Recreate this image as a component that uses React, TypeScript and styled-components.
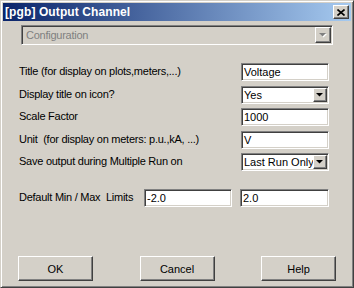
import React from 'react';
import styled, { createGlobalStyle } from 'styled-components';

const GlobalStyle = createGlobalStyle`
  html, body { margin: 0; padding: 0; background: #d4d0c8; }
  body { font-family: "Liberation Sans", Arial, sans-serif; }
`;

// classic win2k palette
const FACE = '#d4d0c8';
const SHADOW = '#808080';
const DARK = '#404040';

const Window = styled.div`
  box-sizing: border-box;
  width: 354px;
  height: 288px;
  display: flex;
  flex-direction: column;
  background: ${FACE};
  border: 1px solid;
  border-color: ${FACE} ${DARK} ${DARK} ${FACE};
  box-shadow: inset 1px 1px #fff, inset -1px -1px ${SHADOW};
  padding: 2px;
`;

const TitleBar = styled.div`
  height: 18px;
  flex: none;
  display: flex;
  align-items: center;
  justify-content: space-between;
  padding: 0 2px 0 2px;
  background: linear-gradient(90deg, #0a246a 0%, #a6caf0 100%);
`;

const TitleText = styled.span`
  color: #fff;
  font-weight: bold;
  font-size: 12px;
  letter-spacing: 0.1px;
`;

const Raised = styled.div`
  box-sizing: border-box;
  background: ${FACE};
  border: 1px solid;
  border-color: #fff ${DARK} ${DARK} #fff;
  box-shadow: inset -1px -1px ${SHADOW};
  display: flex;
  align-items: center;
  justify-content: center;
`;

const CloseButton = styled(Raised)`
  width: 16px;
  height: 14px;
`;

const Body = styled.div`
  flex: 1;
  display: flex;
  flex-direction: column;
  padding: 0 15px 4px 15px;
`;

const Sunken = styled.div<{ $w: number; $h?: number; $disabled?: boolean }>`
  box-sizing: border-box;
  flex: none;
  width: ${(p) => p.$w}px;
  height: ${(p) => p.$h ?? 18}px;
  display: flex;
  align-items: center;
  background: ${(p) => (p.$disabled ? FACE : '#fff')};
  color: ${(p) => (p.$disabled ? SHADOW : '#000')};
  border: 1px solid;
  border-color: ${SHADOW} #fff #fff ${SHADOW};
  box-shadow: inset 1px 1px ${DARK}, inset -1px -1px ${FACE};
  padding: 1px;
  font-size: 11px;
  letter-spacing: ${(p) => (p.$disabled ? '-0.25px' : '0')};
  overflow: hidden;
`;

const FieldText = styled.span<{ $pad?: number }>`
  flex: 1;
  white-space: nowrap;
  overflow: hidden;
  padding-left: ${(p) => p.$pad ?? 1}px;
`;

const ArrowButton = styled(Raised)<{ $size: number }>`
  flex: none;
  width: ${(p) => p.$size}px;
  height: ${(p) => p.$size}px;
`;

const ConfigCombo = styled(Sunken)`
  margin: 4px 3px 0 3px;
  width: auto;
`;

const Row = styled.div<{ $top: number }>`
  display: flex;
  align-items: center;
  margin-top: ${(p) => p.$top}px;
  margin-right: 7px;
  gap: 8px;
`;

const Label = styled.div`
  flex: 1;
  padding-left: 1px;
  font-size: 11px;
  letter-spacing: -0.25px;
  white-space: pre;
  color: #000;
  margin-top: -2px;
`;

const ButtonRow = styled.div`
  margin-top: auto;
  display: flex;
  justify-content: space-between;
`;

const PushButton = styled(Raised)`
  width: 75px;
  height: 25px;
  font-size: 11px;
  color: #000;
`;

const Arrow = ({ disabled }: { disabled?: boolean }) => (
  <svg width="8" height="5" viewBox="0 0 8 5">
    {disabled && <path d="M1 1h7L4.5 4.5z" fill="#fff" />}
    <path d="M0 0h7L3.5 3.5z" fill={disabled ? SHADOW : '#000'} />
  </svg>
);

const Field = ({ w, value }: { w: number; value: string }) => (
  <Sunken $w={w}>
    <FieldText>{value}</FieldText>
  </Sunken>
);

const Combo = ({ w, value }: { w: number; value: string }) => (
  <Sunken $w={w}>
    <FieldText>{value}</FieldText>
    <ArrowButton $size={14}>
      <Arrow />
    </ArrowButton>
  </Sunken>
);

export default function App() {
  return (
    <>
      <GlobalStyle />
      <Window>
        <TitleBar>
          <TitleText>[pgb] Output Channel</TitleText>
          <CloseButton>
            <svg width="8" height="7" viewBox="0 0 8 7">
              <path d="M0.5 0.5l7 6M7.5 0.5l-7 6" stroke="#000" strokeWidth="1.6" />
            </svg>
          </CloseButton>
        </TitleBar>
        <Body>
          <ConfigCombo $w={312} $h={20} $disabled>
            <FieldText $pad={3}>Configuration</FieldText>
            <ArrowButton $size={16}>
              <Arrow disabled />
            </ArrowButton>
          </ConfigCombo>

          <Row $top={18}>
            <Label>Title (for display on plots,meters,...)</Label>
            <Field w={88} value="Voltage" />
          </Row>
          <Row $top={5}>
            <Label>Display title on icon?</Label>
            <Combo w={88} value="Yes" />
          </Row>
          <Row $top={4}>
            <Label>Scale Factor</Label>
            <Field w={88} value="1000" />
          </Row>
          <Row $top={5}>
            <Label>Unit  (for display on meters: p.u.,kA, ...)</Label>
            <Field w={88} value="V" />
          </Row>
          <Row $top={4}>
            <Label>Save output during Multiple Run on</Label>
            <Combo w={88} value="Last Run Only" />
          </Row>
          <Row $top={18}>
            <Label>Default Min / Max  Limits</Label>
            <Field w={88} value="-2.0" />
            <Field w={89} value="2.0" />
          </Row>

          <ButtonRow>
            <PushButton>OK</PushButton>
            <PushButton>Cancel</PushButton>
            <PushButton>Help</PushButton>
          </ButtonRow>
        </Body>
      </Window>
    </>
  );
}
